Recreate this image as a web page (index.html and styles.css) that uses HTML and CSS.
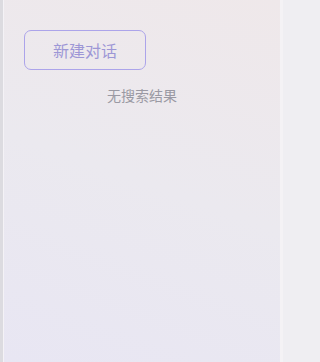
FILE: index.html
```html
<!DOCTYPE html>
<html lang="zh">
<head>
<meta charset="utf-8">
<link rel="stylesheet" href="styles.css">
</head>
<body>
<div class="frame">
  <aside class="sidebar">
    <div class="actions">
      <button class="new-chat">新建对话</button>
    </div>
    <div class="empty">无搜索结果</div>
  </aside>
  <div class="edge"></div>
</div>
</body>
</html>
```
FILE: styles.css
```css
html, body {
  margin: 0;
  padding: 0;
  height: 100%;
}
body {
  font-family: "Noto Sans CJK SC", "Noto Sans", sans-serif;
  background: #efeef2;
}
.frame {
  display: flex;
  width: 286px;
  height: 100%;
  border-left: 3px solid #dcdbe0;
  box-sizing: border-box;
}
.sidebar {
  flex: 1;
  border-left: 1px solid #f4f2f6;
  background: linear-gradient(200deg, #efe8ea 0%, #ebe9ef 50%, #e8e6f3 100%);
  padding: 30px 20px 0 20px;
  box-sizing: border-box;
  display: flex;
  flex-direction: column;
}
.actions {
  display: flex;
}
.new-chat {
  width: 122px;
  height: 40px;
  border: 1px solid #aca4ea;
  border-radius: 7px;
  background: transparent;
  color: #9d97d6;
  font-family: "Noto Sans CJK SC", sans-serif;
  font-size: 16px;
  padding: 0;
  cursor: pointer;
}
.empty {
  margin-top: 15px;
  text-align: center;
  color: #9a99a3;
  font-size: 14px;
  line-height: 20px;
}
.edge {
  width: 6px;
  background: linear-gradient(90deg, #f4f2f5 0 3px, #efeef2 3px 100%);
}
```
